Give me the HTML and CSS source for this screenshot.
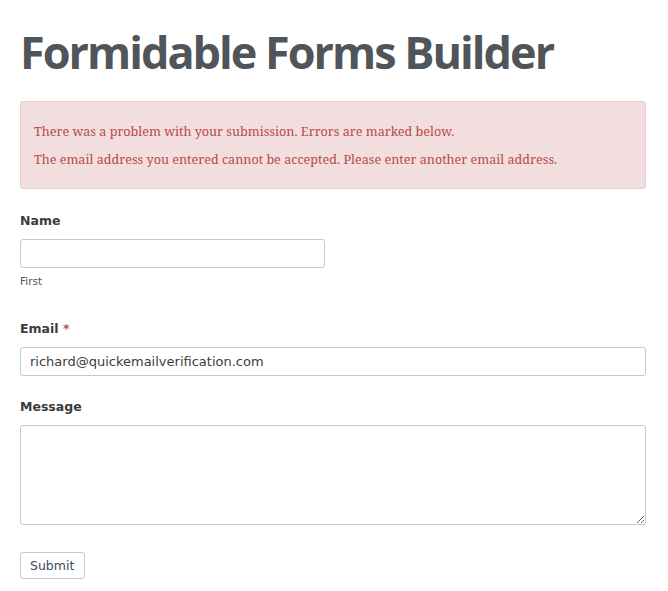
FILE: index.html
```html
<!DOCTYPE html>
<html>
<head>
<meta charset="utf-8">
<link rel="stylesheet" href="styles.css">
</head>
<body>
<div class="page">
  <h1 class="title">Formidable Forms Builder</h1>
  <div class="alert">
    <p>There was a problem with your submission. Errors are marked below.</p>
    <p>The email address you entered cannot be accepted. Please enter another email address.</p>
  </div>
  <form class="form">
    <div class="field">
      <label class="label">Name</label>
      <input class="input input-half" type="text">
      <div class="sublabel">First</div>
    </div>
    <div class="field">
      <label class="label">Email <span class="req">*</span></label>
      <input class="input" type="text" value="richard@quickemailverification.com">
    </div>
    <div class="field">
      <label class="label">Message</label>
      <textarea class="textarea"></textarea>
    </div>
    <button class="submit" type="button">Submit</button>
  </form>
</div>
</body>
</html>
```
FILE: styles.css
```css
html, body { margin: 0; padding: 0; background: #fff; }
.page { padding: 20px 22px 0 20px; }
.title {
  font-family: "Open Sans", sans-serif;
  font-weight: 700;
  font-size: 45px;
  letter-spacing: -2px;
  color: #50555a;
  margin: 0 0 17px 0;
  line-height: 64px;
}
.alert {
  background: #f2dede;
  border: 1px solid #ebccd1;
  border-radius: 3px;
  padding: 16px 13px 14px 13px;
  font-family: "Noto Serif", "DejaVu Serif", serif;
  font-size: 12.6px;
  color: #b94a48;
}
.alert p { margin: 0; line-height: 28px; }
.form { margin-top: 24px; font-family: "DejaVu Sans", sans-serif; }
.field { margin-bottom: 23px; }
.label {
  display: block;
  font-weight: 700;
  font-size: 12.5px;
  color: #3c3c3c;
  margin-bottom: 10px;
  line-height: 16px;
}
.req { color: #c0504d; }
.input {
  display: block;
  box-sizing: border-box;
  width: 100%;
  height: 29px;
  border: 1px solid #c8c8c8;
  border-radius: 3px;
  padding: 0 9px;
  font-family: "DejaVu Sans", sans-serif;
  font-size: 13px;
  color: #3c3c3c;
  margin: 0;
}
.input-half { width: 305px; }
.sublabel {
  font-size: 10.5px;
  color: #555;
  margin-top: 6px;
  line-height: 14px;
  margin-bottom: 33px;
}
.textarea {
  display: block;
  box-sizing: border-box;
  width: 100%;
  height: 100px;
  border: 1px solid #c8c8c8;
  border-radius: 3px;
  margin: 0;
  resize: vertical;
}
.submit {
  margin-top: 4px;
  height: 27px;
  padding: 0 10px 0 9px;
  background: #fff;
  border: 1px solid #c8c8c8;
  border-radius: 3px;
  font-family: "DejaVu Sans", sans-serif;
  font-size: 12.5px;
  color: #3c4a5a;
}
```
